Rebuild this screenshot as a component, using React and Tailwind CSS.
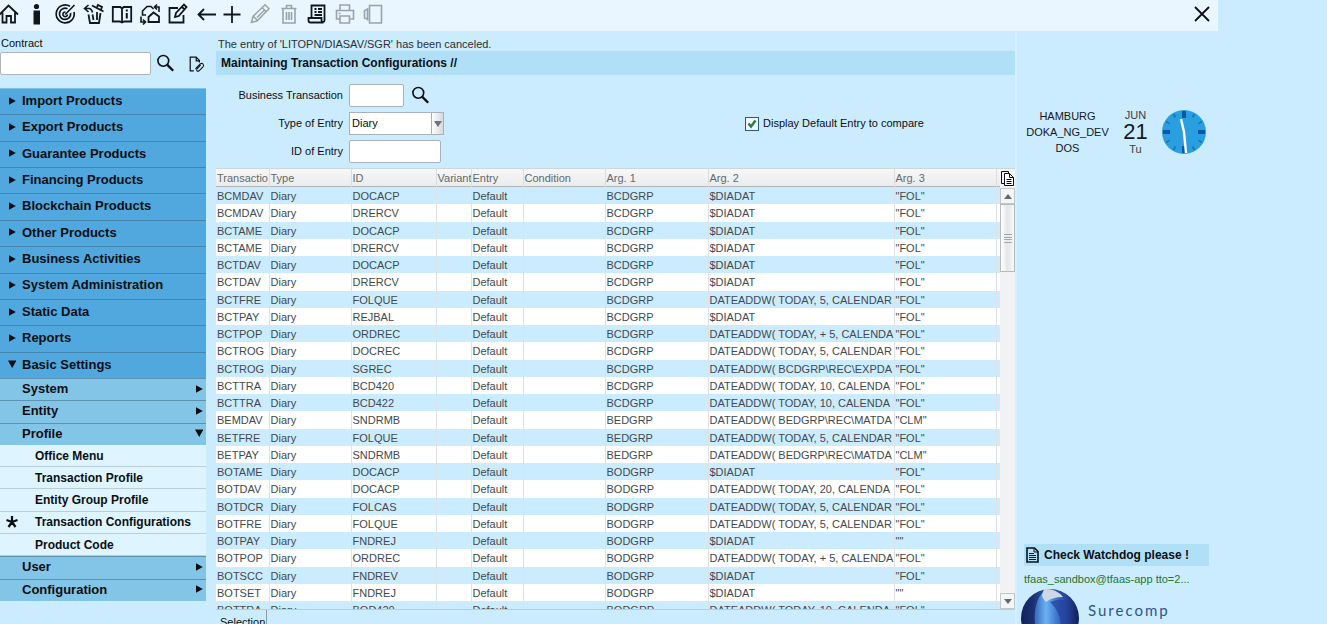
import { useState } from 'react';

const menuItems = [
  'Import Products',
  'Export Products',
  'Guarantee Products',
  'Financing Products',
  'Blockchain Products',
  'Other Products',
  'Business Activities',
  'System Administration',
  'Static Data',
  'Reports',
  'Basic Settings',
];

const subItems = [
  { label: 'System' },
  { label: 'Entity' },
  { label: 'Profile', open: true },
  { label: 'Office Menu', leaf: true },
  { label: 'Transaction Profile', leaf: true },
  { label: 'Entity Group Profile', leaf: true },
  { label: 'Transaction Configurations', leaf: true, current: true },
  { label: 'Product Code', leaf: true },
  { label: 'User' },
  { label: 'Configuration' },
];

const columns = ['Transactio', 'Type', 'ID', 'Variant', 'Entry', 'Condition', 'Arg. 1', 'Arg. 2', 'Arg. 3'];

// transaction, id, arg 1, arg 2, arg 3
const rows = [
  ['BCMDAV', 'DOCACP', 'BCDGRP', '$DIADAT', '"FOL"'],
  ['BCMDAV', 'DRERCV', 'BCDGRP', '$DIADAT', '"FOL"'],
  ['BCTAME', 'DOCACP', 'BCDGRP', '$DIADAT', '"FOL"'],
  ['BCTAME', 'DRERCV', 'BCDGRP', '$DIADAT', '"FOL"'],
  ['BCTDAV', 'DOCACP', 'BCDGRP', '$DIADAT', '"FOL"'],
  ['BCTDAV', 'DRERCV', 'BCDGRP', '$DIADAT', '"FOL"'],
  ['BCTFRE', 'FOLQUE', 'BCDGRP', 'DATEADDW( TODAY, 5, CALENDAR', '"FOL"'],
  ['BCTPAY', 'REJBAL', 'BCDGRP', '$DIADAT', '"FOL"'],
  ['BCTPOP', 'ORDREC', 'BCDGRP', 'DATEADDW( TODAY, + 5, CALENDA', '"FOL"'],
  ['BCTROG', 'DOCREC', 'BCDGRP', 'DATEADDW( TODAY, 5, CALENDAR', '"FOL"'],
  ['BCTROG', 'SGREC', 'BCDGRP', 'DATEADDW( BCDGRP\\REC\\EXPDA', '"FOL"'],
  ['BCTTRA', 'BCD420', 'BCDGRP', 'DATEADDW( TODAY, 10, CALENDA', '"FOL"'],
  ['BCTTRA', 'BCD422', 'BCDGRP', 'DATEADDW( TODAY, 10, CALENDA', '"FOL"'],
  ['BEMDAV', 'SNDRMB', 'BEDGRP', 'DATEADDW( BEDGRP\\REC\\MATDA', '"CLM"'],
  ['BETFRE', 'FOLQUE', 'BEDGRP', 'DATEADDW( TODAY, 5, CALENDAR', '"FOL"'],
  ['BETPAY', 'SNDRMB', 'BEDGRP', 'DATEADDW( BEDGRP\\REC\\MATDA', '"CLM"'],
  ['BOTAME', 'DOCACP', 'BODGRP', '$DIADAT', '"FOL"'],
  ['BOTDAV', 'DOCACP', 'BODGRP', 'DATEADDW( TODAY, 20, CALENDA', '"FOL"'],
  ['BOTDCR', 'FOLCAS', 'BODGRP', 'DATEADDW( TODAY, 5, CALENDAR', '"FOL"'],
  ['BOTFRE', 'FOLQUE', 'BODGRP', 'DATEADDW( TODAY, 5, CALENDAR', '"FOL"'],
  ['BOTPAY', 'FNDREJ', 'BODGRP', '$DIADAT', '""'],
  ['BOTPOP', 'ORDREC', 'BODGRP', 'DATEADDW( TODAY, + 5, CALENDA', '"FOL"'],
  ['BOTSCC', 'FNDREV', 'BODGRP', '$DIADAT', '"FOL"'],
  ['BOTSET', 'FNDREJ', 'BODGRP', '$DIADAT', '""'],
  ['BOTTRA', 'BOD420', 'BODGRP', 'DATEADDW( TODAY, 10, CALENDA', '"FOL"'],
];

const Icon = ({ children, className = 'w-5 h-5' }) => (
  <svg viewBox="0 0 20 20" className={className} fill="none" stroke="currentColor" strokeWidth="1.8" overflow="visible" aria-hidden="true">
    {children}
  </svg>
);

const tools = [
  { name: 'Home', icon: <path d="M-.5 10.500 8.500 1.500l9.500 9M2.500 8.500v10h4V12h4.500v6.500h4v-10" /> },
  {
    name: 'Info',
    icon: (
      <g fill="currentColor" stroke="none">
        <circle cx="8.500" cy="2.500" r="2.600" />
        <path d="M5.500 6.500h6.500v14H5.500z" />
      </g>
    ),
  },
  {
    name: 'Target',
    icon: (
      <>
        <path d="M14 2.300A9 9 0 1 0 18 8" strokeWidth="1.700" />
        <path d="M11.500 4.800A5.600 5.600 0 1 0 14.600 9" strokeWidth="1.700" />
        <path d="M9.500 8a2.300 2.300 0 1 0 2 2.500M9.200 10.500 18.500 1" strokeWidth="1.600" />
      </>
    ),
  },
  {
    name: 'Restore',
    icon: (
      <>
        <path d="M4.500 1 .5 4.500 4.500 8M.5 4.500H5c2.500 0 3 2 3.500 4" strokeWidth="1.600" />
        <path d="m8 1.500 11.500 6M13 3l1-2 4 2-1 2.500" />
        <path d="M4.500 10.500 6 19h9l1.500-10M8.500 10.500 9.500 16M13 8v8" />
      </>
    ),
  },
  {
    name: 'Manual',
    icon: (
      <>
        <path d="M.8 3h7.500L10 4.500 11.700 3h7.500v14.500h-7L10 18.500l-2.200-1H.8zM10 4.500V18" />
        <path d="M14.800 5.500v2M14.800 9v5.500" strokeWidth="2" />
      </>
    ),
  },
  {
    name: 'Change entity',
    icon: (
      <>
        <path d="M13.500 8.500 8.500 13v5h10.500v-5.500z" />
        <path d="M6 11H2.500V7L7 2.500h4l2.500 2.500M19 8V3h-4M17 .5 14.500 3 17 5.500M1 12.500V18h4.500M3 15.500 5.500 18 3 20.500" strokeWidth="1.600" />
      </>
    ),
  },
  { name: 'Edit form', icon: <path d="M10 4H1.500v14.500h14V11M7 13l1-4 8-8.500 2.500 2.500L10.800 12zM14 3l2.500 2.500" /> },
  { name: 'Back', icon: <path d="M20 10.500H2M8 5l-5.500 5.500L8 16" /> },
  { name: 'Add', icon: <path d="M8 2v17M-.5 10.500h17" /> },
  { name: 'Edit', off: true, icon: <path d="m-.5 18.500 1.500-6L13 .8l4 4L5 17zM10 3.500l4 4M1.500 12.500 5 16M5 13.500l7-7" strokeWidth="1.500" /> },
  { name: 'Delete', off: true, icon: <path d="M1.500 4.500h15M6.500 4V1.500h5V4M3 5v14h12V5M6.500 8v8M9 8v8M11.500 8v8" strokeWidth="1.600" /> },
  {
    name: 'Journal',
    icon: <path d="M3.500 13V1.500h13v15c0 2-3 2-3 0V14H.5v2.500q0 2 2 2h13M6.500 5h2M6.500 8h2M10 5h4M10 8h4M6.500 11h7.500" />,
  },
  { name: 'Print', off: true, icon: <path d="M4 6.500V1h9.500v5.500M3.500 15H.5V6.500h17V15h-3M4 12h9.500v7H4zM2.500 9.500h2" strokeWidth="1.600" /> },
  { name: 'Copy view', off: true, icon: <path d="M5.500 1.500h12v17.500h-12zM3.500 4v12.500M.5 6v8.500M.5 6h3M.5 14.500h3" strokeWidth="1.600" /> },
];

const SearchIcon = () => (
  <Icon className="w-[18px] h-[18px]">
    <circle cx="7" cy="6.500" r="6" />
    <path d="m11.500 11 6.500 6.500" strokeWidth="2.600" />
  </Icon>
);

const Arrow = ({ open }) => (
  <svg viewBox="0 0 8 8" className="w-2 h-2 shrink-0" fill="#0b0f14" aria-hidden="true">
    {open ? <path d="M0 .5h8.500L4.200 8z" /> : <path d="M1 .3 7.800 4 1 7.700z" />}
  </svg>
);

const Toolbar = () => (
  <header className="flex items-center justify-between h-[31px] pb-[3px] bg-[#e9f6ff]">
    <div className="flex -ml-1">
      {tools.map((tool) => (
        <button
          key={tool.name}
          type="button"
          aria-label={tool.name}
          disabled={tool.off}
          className="flex items-center justify-center w-7 h-7 text-[#10171c] disabled:text-[#9aa3a8]"
        >
          <Icon>{tool.icon}</Icon>
        </button>
      ))}
    </div>
    <button type="button" aria-label="Close" className="flex items-center justify-center w-8 h-7">
      <Icon>
        <path d="m3 3 14 14M17 3 3 17" />
      </Icon>
    </button>
  </header>
);

const Sidebar = () => {
  const [contract, setContract] = useState('');

  return (
    <aside className="w-[206px] shrink-0 pt-1">
      <label htmlFor="contract" className="block pl-px leading-4">Contract</label>
      <div className="flex items-center mb-[13px] mt-px">
        <input
          id="contract"
          type="text"
          value={contract}
          onChange={(e) => setContract(e.target.value)}
          className="w-[151px] h-[23px] px-1 bg-white border border-[#b0b5b9] rounded-xs"
        />
        <button type="button" aria-label="Search contract" className="ml-[6px]">
          <SearchIcon />
        </button>
        <button type="button" aria-label="Attachments" className="ml-[14px]">
          <Icon className="w-4 h-4">
            <path d="M6 18.500H1.500v-17H9l4 4V8M9 2v4h4" strokeWidth="1.500" />
            <path d="m8 16 6-6q2-1.500 3.500 0t0 3.500l-5 5q-1.500 1-2.500 0t0-2.500l4.500-4.500" strokeWidth="1.300" />
          </Icon>
        </button>
      </div>

      <nav>
        <ul className="grid auto-rows-fr h-[290px] text-[13px] font-bold">
          {menuItems.map((item) => (
            <li key={item} className="flex pb-[2px] bg-[#51a8de] border-t border-[#4584ac] first:border-[#7fc0e8]">
              <button type="button" className="flex items-center w-full gap-[6px] pl-2">
                <Arrow open={item === 'Basic Settings'} />
                {item}
              </button>
            </li>
          ))}
        </ul>
        <ul className="grid auto-rows-fr h-[223px] font-bold">
          {subItems.map((item) =>
            item.leaf ? (
              <li key={item.label} className="flex bg-[#def4fe] border-b border-[#b9cdda]">
                <a href="#" className="flex items-center w-full text-[12px]">
                  <span className="w-[35px] shrink-0 pl-[6px]">
                    {item.current && (
                      <svg viewBox="0 0 12 12" className="w-3 h-3" stroke="#0b0f14" strokeWidth="2.200" aria-hidden="true">
                        <path d="M6 6V0M6 6 .5 4M6 6l5.500-2M6 6l-3.500 5M6 6l3.500 5" />
                      </svg>
                    )}
                  </span>
                  {item.label}
                </a>
              </li>
            ) : (
              <li key={item.label} className="flex pb-[2px] bg-[#82c5e7] border-t border-[#5b93b1]">
                <button type="button" className="flex items-center justify-between w-full pl-[22px] pr-[3px] text-[13px]">
                  {item.label}
                  <Arrow open={item.open} />
                </button>
              </li>
            )
          )}
        </ul>
      </nav>
    </aside>
  );
};

const EntryForm = () => {
  const [form, setForm] = useState({ transaction: '', type: 'Diary', entryId: '', compare: true });

  const handleChange = (e) => {
    const { name, value, type, checked } = e.target;
    setForm((prev) => ({ ...prev, [name]: type === 'checkbox' ? checked : value }));
  };

  return (
    <form className="flex items-center pt-[9px] pb-[5px]">
      <div className="grid grid-cols-[127px_1fr] auto-rows-[23px] items-center gap-x-[6px] gap-y-[5px] w-[529px]">
        <label htmlFor="transaction" className="text-right">Business Transaction</label>
        <div className="flex items-center gap-2">
          <input
            id="transaction"
            name="transaction"
            type="text"
            value={form.transaction}
            onChange={handleChange}
            className="w-[55px] h-[23px] px-[3px] bg-white border border-[#a9b2b8] rounded-xs"
          />
          <button type="button" aria-label="Search transaction"><SearchIcon /></button>
        </div>

        <label htmlFor="type" className="text-right">Type of Entry</label>
        <div className="relative w-[95px] h-[23px]">
          <select
            id="type"
            name="type"
            value={form.type}
            onChange={handleChange}
            className="w-full h-full pl-[2px] appearance-none bg-white border border-[#a9b2b8]"
          >
            <option value="Diary">Diary</option>
          </select>
          <span className="absolute inset-y-px right-px flex items-center justify-center w-3 pointer-events-none bg-linear-to-r from-white to-[#d5d8da] border-l border-[#a9b2b8]">
            <svg viewBox="0 0 8 6" className="w-2 h-[6px]" fill="#68757d" aria-hidden="true">
              <path d="M0 0h8L4 6z" />
            </svg>
          </span>
        </div>

        <label htmlFor="entryId" className="text-right">ID of Entry</label>
        <input
          id="entryId"
          name="entryId"
          type="text"
          value={form.entryId}
          onChange={handleChange}
          className="w-[92px] h-[23px] px-[3px] bg-white border border-[#a9b2b8] rounded-xs"
        />
      </div>

      <label className="flex items-center gap-1">
        <span className="grid">
          <input
            type="checkbox"
            name="compare"
            checked={form.compare}
            onChange={handleChange}
            className="col-start-1 row-start-1 w-[14px] h-[14px] appearance-none bg-[#f1f5f6] border border-[#1f5c95]"
          />
          {form.compare && (
            <svg viewBox="0 0 14 14" className="col-start-1 row-start-1 w-[14px] h-[14px] pointer-events-none" fill="none" stroke="#2a7c46" strokeWidth="2.400" aria-hidden="true">
              <path d="m3.500 6.500 2.500 3 4.500-6" />
            </svg>
          )}
        </span>
        Display Default Entry to compare
      </label>
    </form>
  );
};

const ScrollBar = () => (
  <div className="flex flex-col w-[15px] shrink-0 bg-[#f1f2f3]">
    <button type="button" aria-label="Scroll up" className="flex items-center justify-center h-4 bg-[#f4f5f5] border border-[#c3c8cb]">
      <svg viewBox="0 0 8 5" className="w-2 h-[5px]" fill="#5f6b73" aria-hidden="true"><path d="M0 5h8L4 0z" /></svg>
    </button>
    <div className="flex items-center justify-center h-[68px] bg-linear-to-r from-white via-[#e4e6e8] to-[#f8f8f8] border border-[#b5babd]">
      <svg viewBox="0 0 8 9" className="w-2 h-[9px]" stroke="#a3abb0" aria-hidden="true">
        <path d="M0 .5h8M0 3.500h8M0 5.500h8M0 8.500h8" />
      </svg>
    </div>
    <button type="button" aria-label="Scroll down" className="flex items-center justify-center h-4 mt-auto bg-[#f4f5f5] border border-[#c3c8cb]">
      <svg viewBox="0 0 8 5" className="w-2 h-[5px]" fill="#5f6b73" aria-hidden="true"><path d="M0 0h8L4 5z" /></svg>
    </button>
  </div>
);

const ConfigTable = () => (
  <div className="flex flex-1 min-h-0 border-b border-[#bccbd5]">
    <div className="flex-1 min-w-0 overflow-hidden">
      <table className="w-full table-fixed border-collapse text-left text-[#43494d]">
        <colgroup>
          <col className="w-[53px]" />
          <col className="w-[82px]" />
          <col className="w-[85px]" />
          <col className="w-[35px]" />
          <col className="w-[52px]" />
          <col className="w-[82px]" />
          <col className="w-[103px]" />
          <col className="w-[186px]" />
          <col className="w-[102px]" />
          <col />
        </colgroup>
        <thead>
          <tr className="h-[19px] bg-linear-to-b from-[#f8f8f8] to-[#eaebec] text-[#63696d] shadow-[inset_0_1px_0_#cdd6db,inset_0_-1px_0_#aeb4b8]">
            {columns.map((column) => (
              <th key={column} scope="col" className="p-0 pt-px pl-px font-normal leading-4 overflow-hidden whitespace-nowrap border-r border-[#dadcde]">
                {column}
              </th>
            ))}
            <td />
          </tr>
        </thead>
        <tbody>
          {rows.map(([transaction, id, arg1, arg2, arg3], i) => (
            <tr key={i} className="h-[17px] nth-[4n+2]:h-[18px] odd:bg-[#cbecfe] even:bg-white">
              {[transaction, 'Diary', id, '', 'Default', '', arg1, arg2, arg3].map((value, c) => (
                <td key={c} className="p-0 pl-px leading-4 overflow-hidden whitespace-nowrap border-r border-[#dde2e6]">
                  {value}
                </td>
              ))}
              <td />
            </tr>
          ))}
        </tbody>
      </table>
    </div>
    <div className="flex flex-col">
      <button type="button" aria-label="Copy table" className="flex items-center justify-center w-[15px] h-5 bg-[#f1f2f2] border-t border-[#cdd6db]">
        <svg viewBox="0 0 13 15" className="w-[13px] h-[15px]" fill="white" stroke="#0b0f14" aria-hidden="true">
          <path d="M.5 12.500V.5h7v2M.5 12.500H3" fill="none" />
          <path d="M3.500 2.500h5l4 4v8h-9zM8.500 2.500v4h4M5.500 8.500h5M5.500 10.500h5M5.500 12.500h5" />
        </svg>
      </button>
      <div className="flex flex-1"><ScrollBar /></div>
    </div>
  </div>
);

const ClockFace = () => (
  <svg viewBox="0 0 44 44" className="w-11 h-11" role="img" aria-label="Clock">
    <circle cx="22" cy="22" r="22" fill="#2a9fe0" />
    <path d="M22 1v7M22 36v7M1 22h7M36 22h7" stroke="#0a56a8" strokeWidth="4" />
    <path d="m11.500 4 2 3.500M4 11.500l3.500 2M32.500 4l-2 3.500M40 11.500l-3.500 2M4 32.500l3.500-2M11.500 40l2-3.500M40 32.500l-3.500-2M32.500 40l-2-3.500" stroke="#1479c4" strokeWidth="2" />
    <path d="m19 9 3 13 2 21" fill="none" stroke="white" strokeWidth="2.400" />
  </svg>
);

const InfoPanel = () => (
  <aside className="flex flex-col w-[203px] shrink-0 pt-[77px] pl-[7px] border-l-2 border-[#d5f0ff]">
    <div className="flex items-center pl-[2px] text-[#15191c]">
      <p className="w-[83px] text-center leading-4">
        HAMBURG<br />DOKA_NG_DEV<br />DOS
      </p>
      <div className="flex flex-col items-center w-[53px] text-[#3c4246]">
        <span className="text-[11px] leading-3">JUN</span>
        <span className="text-[22px] leading-[22px] text-[#15191c]">21</span>
        <span className="text-[11px] leading-3">Tu</span>
      </div>
      <ClockFace />
    </div>

    <div className="mt-auto">
      <button type="button" className="flex items-center w-[185px] h-[22px] gap-[5px] pl-[2px] bg-[#b0dff8] text-[12px] font-bold">
        <svg viewBox="0 0 13 16" className="w-[13px] h-4" fill="none" stroke="#0b0f14" aria-hidden="true">
          <path d="M1 1h7.500L12 4.500V15H1z" strokeWidth="1.600" />
          <path d="M8 1.500V5h4M3 6.500h5M3 8.500h7M3 10.500h7M3 12.500h7" />
        </svg>
        Check Watchdog please !
      </button>
      <p className="pt-[5px] pb-px leading-4 text-[#23752f]">tfaas_sandbox@tfaas-app tto=2...</p>
      <div className="flex h-9 -ml-1 gap-2 overflow-hidden">
        <svg viewBox="0 0 60 60" className="w-[60px] h-[60px] shrink-0" aria-hidden="true">
          <defs>
            <linearGradient id="orb" x1="0" x2="1">
              <stop offset="0" stopColor="#13225c" />
              <stop offset="0.200" stopColor="#1b2f70" />
              <stop offset="0.450" stopColor="#2b5aa8" />
              <stop offset="0.750" stopColor="#2a4aa0" />
              <stop offset="1" stopColor="#121f5c" />
            </linearGradient>
            <linearGradient id="lens" x1="0" x2="1">
              <stop offset="0" stopColor="#3568bd" />
              <stop offset="0.350" stopColor="#6cb1f0" />
              <stop offset="0.700" stopColor="#3c74cc" />
              <stop offset="1" stopColor="#2743a0" />
            </linearGradient>
          </defs>
          <circle cx="30" cy="30" r="29" fill="url(#orb)" />
          <path d="M25 2C11 14 11 45 26 59c18-6 26-30 18-48C39 4 31 1 25 2z" fill="url(#lens)" />
          <path d="M24 1q12-1 19 8-11 0-17 5-4-4-4-7z" fill="#cfd8e6" />
          <path d="M30 14q14-6 18 2 3 10 0 22l-8 16q5-26-10-40z" fill="#22409a" opacity="0.700" />
        </svg>
        <span className="pt-3 font-['Lato'] text-[15px] leading-5 tracking-[2px] text-[#2d5393]">Surecomp</span>
      </div>
    </div>
  </aside>
);

const App = () => (
  <div className="h-screen overflow-hidden bg-[#cbecfe] font-['Liberation_Sans',Arial,sans-serif] text-[11px] text-[#0b0f14]">
    <div className="flex flex-col h-full max-w-[1218px]">
      <Toolbar />
      <div className="flex flex-1 min-h-0">
        <Sidebar />
        <main className="flex flex-col flex-1 min-w-0 pl-[10px]">
          <p className="h-5 pt-[5px] pl-[2px] leading-4 text-[#2a3034]">The entry of 'LITOPN/DIASAV/SGR' has been canceled.</p>
          <h1 className="h-6 pl-[5px] bg-[#b0dff8] text-[12px] font-bold leading-6">Maintaining Transaction Configurations //</h1>
          <EntryForm />
          <ConfigTable />
          <div className="flex h-[14px] overflow-hidden">
            <button type="button" className="self-start shrink-0 pl-1 pr-px pt-1 leading-4 border-r border-[#8d9ba5]">Selection</button>
          </div>
        </main>
        <InfoPanel />
      </div>
    </div>
  </div>
);

export default App;
